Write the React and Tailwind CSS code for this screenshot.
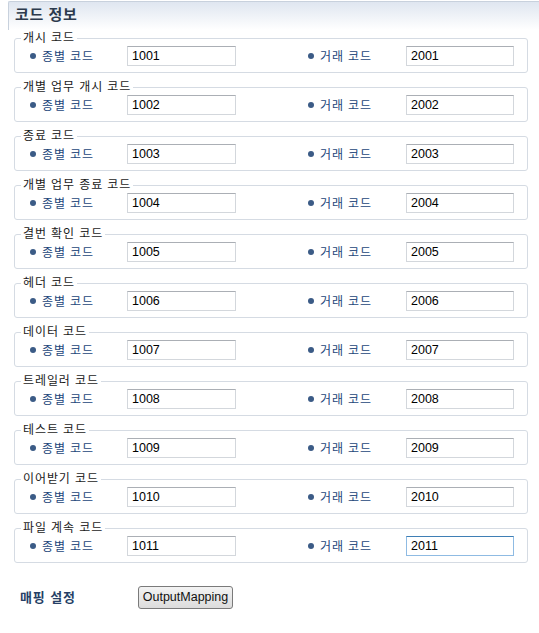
import React from "react";

const rows = [
  ["개시 코드", "1001", "2001"],
  ["개별 업무 개시 코드", "1002", "2002"],
  ["종료 코드", "1003", "2003"],
  ["개별 업무 종료 코드", "1004", "2004"],
  ["결번 확인 코드", "1005", "2005"],
  ["헤더 코드", "1006", "2006"],
  ["데이터 코드", "1007", "2007"],
  ["트레일러 코드", "1008", "2008"],
  ["테스트 코드", "1009", "2009"],
  ["이어받기 코드", "1010", "2010"],
  ["파일 계속 코드", "1011", "2011"],
];

function Field({ value, focused }) {
  return (
    <div
      className={
        "w-full h-[20px] flex items-center pl-[4px] text-[12.5px] text-black bg-white border " +
        (focused
          ? "border-[#8fbbe3] border-t-[#3f7fb5]"
          : "border-[#d3d7dc] border-t-[#abafb5]")
      }
    >
      {value}
    </div>
  );
}

function Label({ text }) {
  return (
    <div className="flex items-center">
      <span className="w-[6px] h-[6px] rounded-full bg-[#3b5b86]" />
      <span className="ml-[6px] pt-[2px] text-[12px] tracking-[0.9px] text-[#23467a] leading-none">
        {text}
      </span>
    </div>
  );
}

export default function App() {
  return (
    <div
      className="w-[539px] h-[633px] bg-white overflow-hidden"
      style={{ fontFamily: "'Liberation Sans', 'Noto Sans CJK KR', sans-serif" }}
    >
      <div className="pt-[1px]">
        <div className="ml-[8px] h-[29px] border-t border-l border-[#c8d1dd] bg-gradient-to-b from-[#dfe6f0] to-white rounded-tl-[2px]">
          <div className="pl-[6px] pt-[4px] text-[15px] font-bold tracking-[0.6px] text-[#2c3a4d] leading-[18px]">
            코드 정보
          </div>
        </div>
      </div>
      <div className="ml-[14px] w-[514px] flex flex-col gap-[6px]">
        {rows.map(([title, a, b], i) => (
          <fieldset
            key={title}
            className="border border-[#d5dbe3] rounded-[3px] pb-[6px]"
          >
            <legend className="ml-[6px] px-[2px] text-[12px] tracking-[0.9px] leading-[16px] text-[#1a1a1a]">
              {title}
            </legend>
            <div className="flex items-center h-[20px]">
              <div className="ml-[15px] w-[97px]">
                <Label text="종별 코드" />
              </div>
              <div className="w-[109px]">
                <Field value={a} />
              </div>
              <div className="ml-[72px] w-[98px]">
                <Label text="거래 코드" />
              </div>
              <div className="w-[108px]">
                <Field value={b} focused={i === rows.length - 1} />
              </div>
            </div>
          </fieldset>
        ))}
      </div>
      <div className="mt-[23px] flex items-center">
        <div className="ml-[20px] w-[118px] text-[13px] font-semibold tracking-[0.9px] text-[#263f66]">
          매핑 설정
        </div>
        <button className="w-[95px] h-[23px] border border-[#7a7a7a] rounded-[3px] bg-gradient-to-b from-[#f3f3f3] to-[#dcdcdc] text-[12.5px] text-[#111] leading-none">
          OutputMapping
        </button>
      </div>
    </div>
  );
}
